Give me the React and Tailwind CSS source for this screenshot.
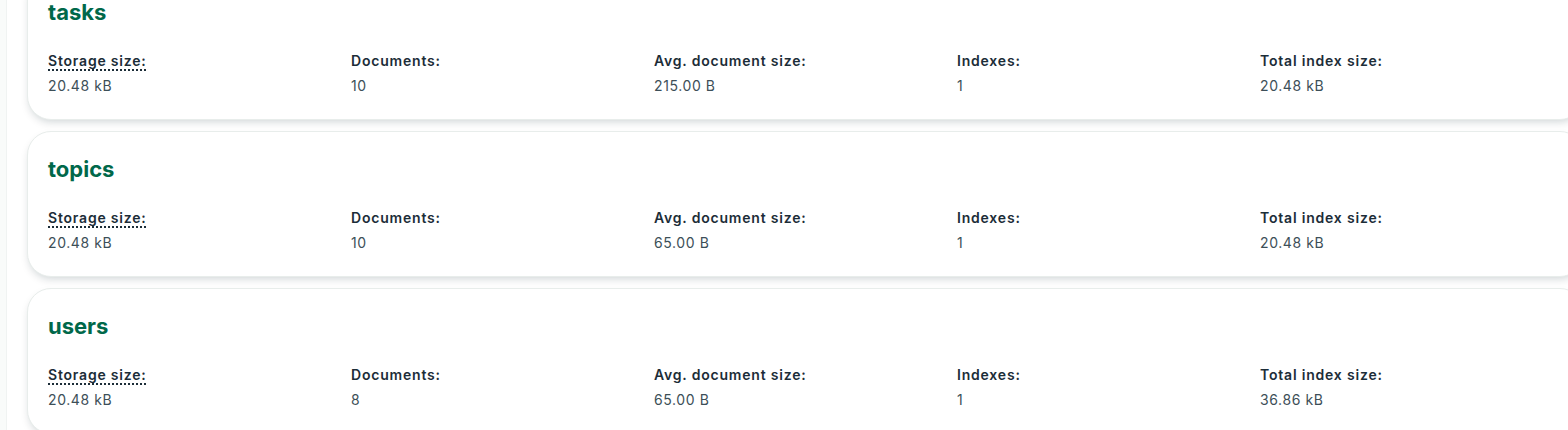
const collections = [
  { name: 'tasks', storage: '20.48 kB', docs: '10', avg: '215.00 B', indexes: '1', indexSize: '20.48 kB' },
  { name: 'topics', storage: '20.48 kB', docs: '10', avg: '65.00 B', indexes: '1', indexSize: '20.48 kB' },
  { name: 'users', storage: '20.48 kB', docs: '8', avg: '65.00 B', indexes: '1', indexSize: '36.86 kB' },
];

function Stat({ label, value, dotted }) {
  return (
    <div className="flex flex-col">
      <span
        className={`text-[14px] leading-5 font-semibold tracking-[0.8px] text-[#1c2d38] self-start ${dotted ? 'underline decoration-dotted decoration-[1.5px] underline-offset-[3px]' : ''}`}
      >
        {label}
      </span>
      <span className="text-[14px] leading-5 mt-[5px] tracking-[0.6px] text-[#3d4f58]">{value}</span>
    </div>
  );
}

function CollectionCard({ c }) {
  return (
    <div className="bg-white border border-[#e8edeb] rounded-[24px] shadow-[0_4px_10px_-3px_rgba(0,30,43,0.22)] pl-5 pr-5 pt-[23px] h-[146px] shrink-0">
      <h2 className="text-[22px] leading-7 font-bold text-[#00684a]">{c.name}</h2>
      <div className="grid grid-cols-5 mt-[25px]">
        <Stat label="Storage size:" value={c.storage} dotted />
        <Stat label="Documents:" value={c.docs} />
        <Stat label="Avg. document size:" value={c.avg} />
        <Stat label="Indexes:" value={c.indexes} />
        <Stat label="Total index size:" value={c.indexSize} />
      </div>
    </div>
  );
}

export default function App() {
  return (
    <div className="flex h-[430px] w-[1568px] overflow-hidden bg-white" style={{ fontFamily: 'Inter, "Noto Sans", sans-serif' }}>
      <div className="w-[7px] shrink-0 bg-[#f9fbfa] border-r border-[#f0f3f2]" />
      <div className="flex-1 overflow-hidden">
        <div className="flex flex-col gap-[11px] -mt-[26px] pl-[20px] w-[1577px]">
          {collections.map(c => (
            <CollectionCard key={c.name} c={c} />
          ))}
        </div>
      </div>
    </div>
  );
}
